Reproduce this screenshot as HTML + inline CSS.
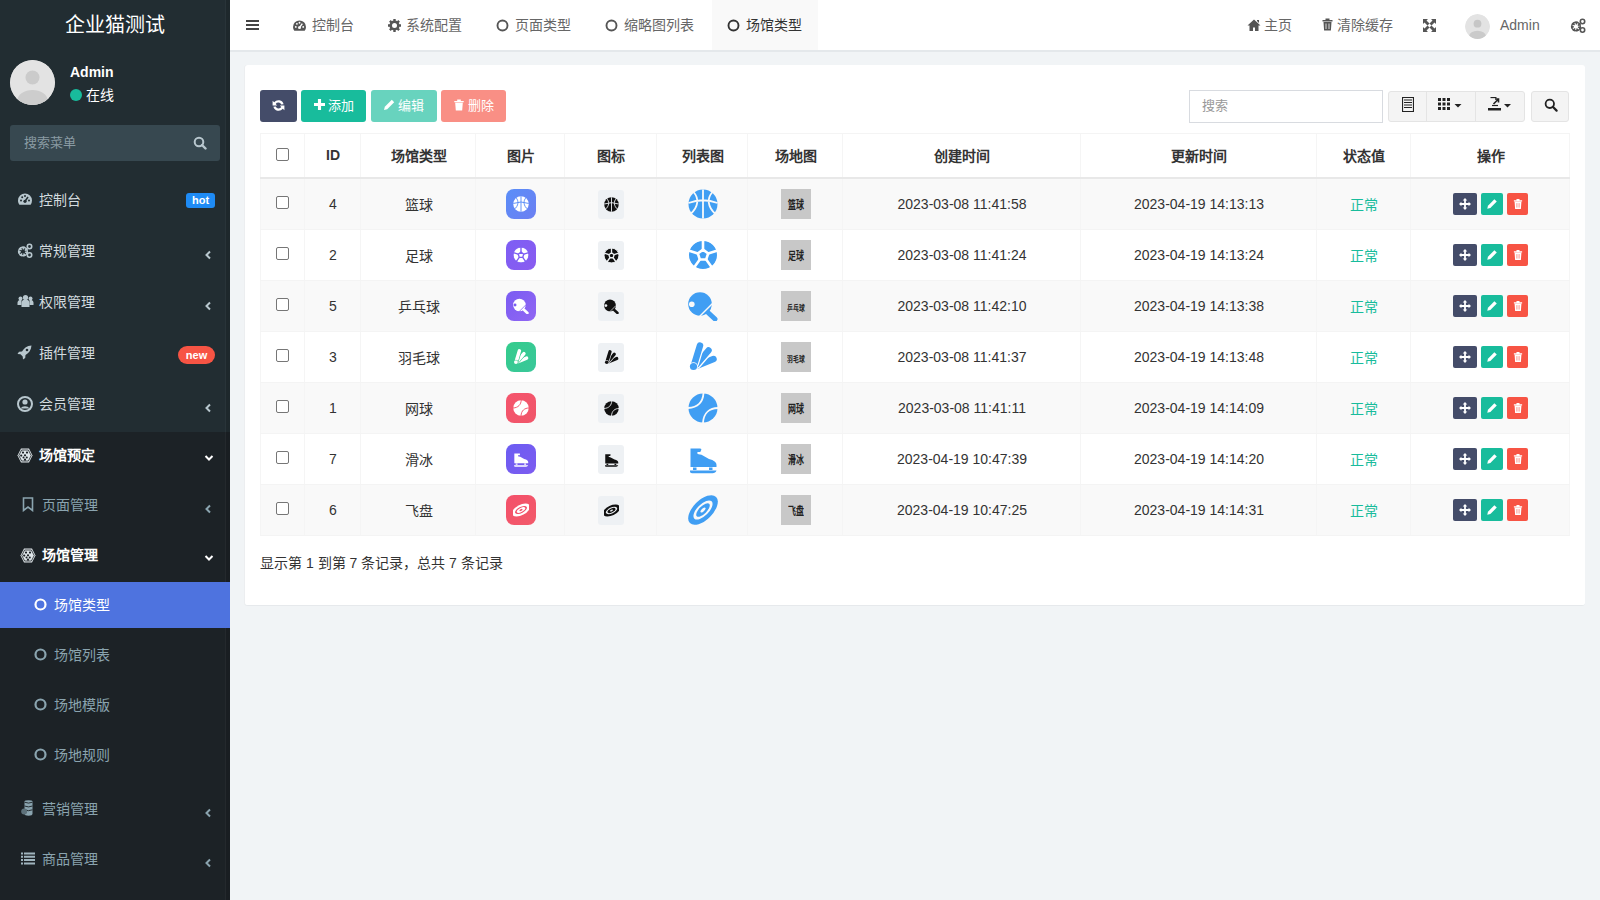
<!DOCTYPE html>
<html lang="zh-CN"><head><meta charset="utf-8">
<style>
*{box-sizing:border-box;margin:0;padding:0}
html,body{width:1600px;height:900px;overflow:hidden}
body{font-family:"Liberation Sans",sans-serif;font-size:14px;color:#333;background:#f1f4f6;position:relative}
.abs{position:absolute}
#sb{position:absolute;left:0;top:0;width:230px;height:900px;background:#222d32}
#sb .logo{position:absolute;left:0;top:0;width:230px;height:50px;line-height:50px;text-align:center;color:#fff;font-size:20px}
#sb .tv{position:absolute;left:0;top:432px;width:230px;height:468px;background:#1c2226}
.mi{position:absolute;left:0;width:230px;height:20px;line-height:20px;color:#d2dbdf;font-size:14px;white-space:nowrap}
.mi .ic{position:absolute;top:2px}
.mi .tx{position:absolute;top:0}
.mi .ar{position:absolute;left:204px;top:4px}
#hd{position:absolute;left:230px;top:0;width:1370px;height:52px;background:#fff;border-bottom:2px solid #e4e8eb}
.nav{position:absolute;top:0;height:50px;line-height:50px;color:#666;font-size:14px;white-space:nowrap}
#panel{position:absolute;left:245px;top:65px;width:1340px;height:541px;background:#fff;border-radius:3px;border-bottom:1px solid #e6e9ec;box-shadow:-1px 0 0 #eceef0}
.btn{position:absolute;top:90px;height:32px;border-radius:3px;color:#fff;font-size:13px;line-height:31px;text-align:center;white-space:nowrap}
.cb{display:inline-block;width:13px;height:13px;border:1px solid #767676;border-radius:2px;background:#fff;position:relative;top:-2px}

.pic{display:inline-block;width:30px;height:30px;border-radius:8px;vertical-align:middle;position:relative}
.pic svg{position:absolute;left:7px;top:7px}
.ico{display:inline-block;width:26px;height:29px;border-radius:3px;background:#eef1f4;vertical-align:middle;position:relative}
.ico svg{position:absolute;left:5.5px;top:7px}
.lst{vertical-align:middle}
.chd{display:inline-block;width:30px;height:30px;background:#c8c8c8;vertical-align:middle;line-height:30px;text-align:center;color:#333;overflow:hidden;white-space:nowrap}

.ob{display:inline-block;height:22px;border-radius:2px;vertical-align:middle;position:relative}
.ob svg{position:absolute;left:50%;top:50%;transform:translate(-50%,-50%)}
#tbl{position:absolute;left:260px;top:133px;width:1310px;height:403px}
.tr{position:absolute;left:0;width:1310px;height:51px;display:flex;border-bottom:1px solid #f4f4f4;background:#fff}
.tr.s{background:#f9f9f9}
.tr.th{height:46px;border-top:1px solid #f4f4f4;border-bottom:2px solid #e8e8e8;font-weight:bold}
.tr.th .td{padding-bottom:2px}
.tr.th .cb{top:0}
.td{flex:none;height:100%;display:flex;align-items:center;justify-content:center;box-shadow:inset -1px 0 #f5f5f5;font-size:14px;color:#333;white-space:nowrap}
.td:first-child{box-shadow:inset 1px 0 #f5f5f5,inset -1px 0 #f5f5f5}
.td.ok{color:#18bc9c}
</style></head><body>
<div id="sb">
  <div class="logo">企业猫测试</div>
  <!-- user panel -->
  <div class="abs" style="left:10px;top:60px;width:45px;height:45px;border-radius:50%;background:#d8d8d8;overflow:hidden">
    <svg width="45" height="45" viewBox="0 0 45 45"><circle cx="22.5" cy="22.5" r="22.5" fill="#e3e3e3"/><circle cx="22.5" cy="17.5" r="7" fill="#cbcbcb"/><ellipse cx="22.5" cy="40" rx="15" ry="10" fill="#cdcdcd"/></svg>
  </div>
  <div class="abs" style="left:70px;top:63px;color:#fff;font-weight:bold;font-size:14px;line-height:18px">Admin</div>
  <div class="abs" style="left:70px;top:89px;width:12px;height:12px;border-radius:50%;background:#18bc9c"></div>
  <div class="abs" style="left:86px;top:86px;color:#fff;font-size:14px;line-height:18px">在线</div>
  <!-- search -->
  <div class="abs" style="left:10px;top:125px;width:210px;height:36px;background:#374850;border-radius:3px"></div>
  <div class="abs" style="left:24px;top:134px;color:#8a9ba3;font-size:13px;line-height:18px">搜索菜单</div>
  <svg class="abs" style="left:193px;top:136px" width="14" height="14" viewBox="0 0 14 14"><circle cx="6" cy="6" r="4.3" fill="none" stroke="#b8c7ce" stroke-width="2"/><path d="M9 9 L12.5 12.5" stroke="#b8c7ce" stroke-width="2.4" stroke-linecap="round"/></svg>

  <!-- level1 -->
  <div class="mi" style="top:190px">
    <svg class="ic" style="left:17px" width="16" height="14" viewBox="0 0 16 14"><path d="M8 1.5A7 7 0 0 0 1 8.5c0 1.6.5 3 1.4 4.2h11.2A7 7 0 0 0 15 8.5 7 7 0 0 0 8 1.5z" fill="#b8c7ce"/><circle cx="8" cy="9.3" r="1.6" fill="#222d32"/><path d="M8 9.3 L11 5" stroke="#222d32" stroke-width="1.5"/><circle cx="4" cy="8.5" r="1" fill="#222d32"/><circle cx="5.2" cy="5.2" r="1" fill="#222d32"/><circle cx="8" cy="4" r="1" fill="#222d32"/><circle cx="12" cy="8.5" r="1" fill="#222d32"/></svg>
    <span class="tx" style="left:39px">控制台</span>
    <span class="abs" style="left:186px;top:3px;width:29px;height:15px;line-height:15px;background:#3c8dbc;background:#1e8bf5;color:#fff;font-size:11px;font-weight:bold;text-align:center;border-radius:3px">hot</span>
  </div>
  <div class="mi" style="top:241px">
    <svg class="ic" style="left:17px" width="16" height="15" viewBox="0 0 16 15"><circle cx="6" cy="8.5" r="3.6" fill="none" stroke="#b8c7ce" stroke-width="3" stroke-dasharray="2 1.2"/><circle cx="6" cy="8.5" r="4.3" fill="none" stroke="#b8c7ce" stroke-width="1.4"/><circle cx="12.5" cy="3.5" r="2.2" fill="none" stroke="#b8c7ce" stroke-width="1.6"/><circle cx="12.5" cy="12" r="2.2" fill="none" stroke="#b8c7ce" stroke-width="1.6"/></svg>
    <span class="tx" style="left:39px">常规管理</span>
    <span class="ar"><svg width="8" height="10" viewBox="0 0 8 10"><path d="M6 1.5 L2.5 5 L6 8.5" fill="none" stroke="#b8c7ce" stroke-width="2"/></svg></span>
  </div>
  <div class="mi" style="top:292px">
    <svg class="ic" style="left:17px" width="17" height="14" viewBox="0 0 17 14"><circle cx="8.5" cy="3.5" r="2.6" fill="#b8c7ce"/><circle cx="3.5" cy="4.5" r="2" fill="#b8c7ce"/><circle cx="13.5" cy="4.5" r="2" fill="#b8c7ce"/><path d="M4.5 13v-3.5a4 4 0 0 1 8 0V13z" fill="#b8c7ce"/><path d="M0.5 11v-2.5a3 3 0 0 1 4-2.5V11z M16.5 11v-2.5a3 3 0 0 0-4-2.5V11z" fill="#b8c7ce"/></svg>
    <span class="tx" style="left:39px">权限管理</span>
    <span class="ar"><svg width="8" height="10" viewBox="0 0 8 10"><path d="M6 1.5 L2.5 5 L6 8.5" fill="none" stroke="#b8c7ce" stroke-width="2"/></svg></span>
  </div>
  <div class="mi" style="top:343px">
    <svg class="ic" style="left:17px" width="15" height="15" viewBox="0 0 15 15"><path d="M14.5 0.5C10 0.8 7 3 5 6.5L2 6.8 0.5 9l3 .3 2.2 2.2.3 3 2.2-1.5.3-3C12 8 14.2 5 14.5.5z" fill="#b8c7ce"/><circle cx="10" cy="5" r="1.3" fill="#222d32"/></svg>
    <span class="tx" style="left:39px">插件管理</span>
    <span class="abs" style="left:178px;top:3px;width:37px;height:18px;line-height:18px;background:#f75444;color:#fff;font-size:11px;font-weight:bold;text-align:center;border-radius:9px">new</span>
  </div>
  <div class="mi" style="top:394px">
    <svg class="ic" style="left:17px" width="16" height="16" viewBox="0 0 16 16"><circle cx="8" cy="8" r="7" fill="none" stroke="#b8c7ce" stroke-width="2"/><circle cx="8" cy="6" r="2.6" fill="#b8c7ce"/><path d="M3.5 12.5a5 4 0 0 1 9 0" fill="#b8c7ce"/></svg>
    <span class="tx" style="left:39px">会员管理</span>
    <span class="ar"><svg width="8" height="10" viewBox="0 0 8 10"><path d="M6 1.5 L2.5 5 L6 8.5" fill="none" stroke="#b8c7ce" stroke-width="2"/></svg></span>
  </div>

  <div class="tv"></div>
  <div class="abs" style="left:225px;top:0;width:1px;height:900px;background:rgba(255,255,255,.035)"></div>
  <div class="abs" style="left:226px;top:0;width:4px;height:900px;background:rgba(0,0,0,.1)"></div>
  <div class="mi" style="top:445px;color:#fff">
    <svg class="ic" style="left:17px;top:3px" width="16" height="15" viewBox="0 0 16 15"><path d="M4 0.5h8l3.5 7-3.5 7H4L0.5 7.5z" fill="#dfe6e9"/><path d="M4.6 2h6.8l2.8 5.5-2.8 5.5H4.6L1.8 7.5z" fill="none" stroke="#1c2226" stroke-width=".8"/><circle cx="6" cy="4.6" r="1.1" fill="#1c2226"/><circle cx="10" cy="4.6" r="1.1" fill="#1c2226"/><circle cx="4.2" cy="7.6" r="1.1" fill="#1c2226"/><circle cx="8" cy="7.3" r="1.1" fill="#1c2226"/><circle cx="6.5" cy="9.6" r="1" fill="#1c2226"/><circle cx="9.8" cy="9.6" r="1" fill="#1c2226"/><circle cx="8" cy="11.7" r="1.1" fill="#1c2226"/></svg>
    <span class="tx" style="left:39px;font-weight:bold">场馆预定</span>
    <span class="ar" style="top:2px"><svg width="10" height="8" viewBox="0 0 10 8"><path d="M1.5 2 L5 5.5 L8.5 2" fill="none" stroke="#fff" stroke-width="2"/></svg></span>
  </div>
  <div class="mi" style="top:495px;color:#8aa4af">
    <svg class="ic" style="left:22px;top:2px" width="12" height="15" viewBox="0 0 12 15"><path d="M1.5 1h9v12.5L6 10l-4.5 3.5z" fill="none" stroke="#8aa4af" stroke-width="1.6"/></svg>
    <span class="tx" style="left:42px">页面管理</span>
    <span class="ar"><svg width="8" height="10" viewBox="0 0 8 10"><path d="M6 1.5 L2.5 5 L6 8.5" fill="none" stroke="#8aa4af" stroke-width="2"/></svg></span>
  </div>
  <div class="mi" style="top:545px;color:#fff">
    <svg class="ic" style="left:20px;top:3px" width="16" height="15" viewBox="0 0 16 15"><path d="M4 0.5h8l3.5 7-3.5 7H4L0.5 7.5z" fill="#dfe6e9"/><path d="M4.6 2h6.8l2.8 5.5-2.8 5.5H4.6L1.8 7.5z" fill="none" stroke="#1c2226" stroke-width=".8"/><circle cx="6" cy="4.6" r="1.1" fill="#1c2226"/><circle cx="10" cy="4.6" r="1.1" fill="#1c2226"/><circle cx="4.2" cy="7.6" r="1.1" fill="#1c2226"/><circle cx="8" cy="7.3" r="1.1" fill="#1c2226"/><circle cx="6.5" cy="9.6" r="1" fill="#1c2226"/><circle cx="9.8" cy="9.6" r="1" fill="#1c2226"/><circle cx="8" cy="11.7" r="1.1" fill="#1c2226"/></svg>
    <span class="tx" style="left:42px;font-weight:bold">场馆管理</span>
    <span class="ar" style="top:2px"><svg width="10" height="8" viewBox="0 0 10 8"><path d="M1.5 2 L5 5.5 L8.5 2" fill="none" stroke="#fff" stroke-width="2"/></svg></span>
  </div>
  <div class="abs" style="left:0;top:582px;width:230px;height:46px;background:#4e73df"></div>
  <div class="mi" style="top:595px;color:#fff">
    <svg class="ic" style="left:34px;top:3px" width="13" height="13" viewBox="0 0 13 13"><circle cx="6.5" cy="6.5" r="5" fill="none" stroke="#fff" stroke-width="2.2"/></svg>
    <span class="tx" style="left:54px">场馆类型</span>
  </div>
  <div class="mi" style="top:645px;color:#8aa4af">
    <svg class="ic" style="left:34px;top:3px" width="13" height="13" viewBox="0 0 13 13"><circle cx="6.5" cy="6.5" r="5" fill="none" stroke="#8aa4af" stroke-width="2.2"/></svg>
    <span class="tx" style="left:54px">场馆列表</span>
  </div>
  <div class="mi" style="top:695px;color:#8aa4af">
    <svg class="ic" style="left:34px;top:3px" width="13" height="13" viewBox="0 0 13 13"><circle cx="6.5" cy="6.5" r="5" fill="none" stroke="#8aa4af" stroke-width="2.2"/></svg>
    <span class="tx" style="left:54px">场地模版</span>
  </div>
  <div class="mi" style="top:745px;color:#8aa4af">
    <svg class="ic" style="left:34px;top:3px" width="13" height="13" viewBox="0 0 13 13"><circle cx="6.5" cy="6.5" r="5" fill="none" stroke="#8aa4af" stroke-width="2.2"/></svg>
    <span class="tx" style="left:54px">场地规则</span>
  </div>
  <div class="mi" style="top:799px;color:#8aa4af">
    <svg class="ic" style="left:21px;top:1px" width="13" height="16" viewBox="0 0 13 16"><path d="M3.5 1.5Q3.5 0.3 7.5 0.3T11.5 1.5V13.5Q11.5 15.7 7.5 15.7T3.5 13.5Z" fill="#8aa4af"/><path d="M3.5 2.2Q7.5 4 11.5 2.2M3.5 6Q7.5 7.8 11.5 6M3.5 9.8Q7.5 11.6 11.5 9.8" fill="none" stroke="#1c2226" stroke-width=".9"/><circle cx="3.2" cy="11.5" r="3" fill="#5d717a"/></svg>
    <span class="tx" style="left:42px">营销管理</span>
    <span class="ar"><svg width="8" height="10" viewBox="0 0 8 10"><path d="M6 1.5 L2.5 5 L6 8.5" fill="none" stroke="#8aa4af" stroke-width="2"/></svg></span>
  </div>
  <div class="mi" style="top:849px;color:#8aa4af">
    <svg class="ic" style="left:21px;top:3px" width="14" height="13" viewBox="0 0 14 13"><path d="M0 0.5h2v2H0zM3 0.5h11v2H3zM0 3.8h2v2H0zM3 3.8h11v2H3zM0 7.1h2v2H0zM3 7.1h11v2H3zM0 10.4h2v2H0zM3 10.4h11v2H3z" fill="#9fb4bd"/></svg>
    <span class="tx" style="left:42px">商品管理</span>
    <span class="ar"><svg width="8" height="10" viewBox="0 0 8 10"><path d="M6 1.5 L2.5 5 L6 8.5" fill="none" stroke="#8aa4af" stroke-width="2"/></svg></span>
  </div>
</div>
<div id="hd">
  <svg class="abs" style="left:16px;top:19px" width="13" height="12" viewBox="0 0 13 12"><path d="M0 1h13v2H0zM0 5h13v2H0zM0 9h13v2H0z" fill="#444"/></svg>
  <div class="nav" style="left:62px">
    <svg style="position:absolute;left:0;top:19px" width="15" height="13" viewBox="0 0 16 14"><path d="M8 1.5A7 7 0 0 0 1 8.5c0 1.6.5 3 1.4 4.2h11.2A7 7 0 0 0 15 8.5 7 7 0 0 0 8 1.5z" fill="#555"/><circle cx="8" cy="9.3" r="1.6" fill="#fff"/><path d="M8 9.3 L11 5" stroke="#fff" stroke-width="1.5"/><circle cx="4" cy="8.5" r="1" fill="#fff"/><circle cx="5.2" cy="5.2" r="1" fill="#fff"/><circle cx="8" cy="4" r="1" fill="#fff"/><circle cx="12" cy="8.5" r="1" fill="#fff"/></svg>
    <span style="position:absolute;left:20px">控制台</span>
  </div>
  <div class="nav" style="left:158px">
    <svg style="position:absolute;left:0;top:19px" width="13" height="13" viewBox="0 0 13 13"><circle cx="6.5" cy="6.5" r="3.8" fill="none" stroke="#555" stroke-width="2.6"/><path d="M6.5 0v3M6.5 10v3M0 6.5h3M10 6.5h3M1.9 1.9l2.1 2.1M9 9l2.1 2.1M1.9 11.1L4 9M9 4l2.1-2.1" stroke="#555" stroke-width="2.4"/></svg>
    <span style="position:absolute;left:18px">系统配置</span>
  </div>
  <div class="nav" style="left:266px">
    <svg style="position:absolute;left:0;top:19px" width="13" height="13" viewBox="0 0 13 13"><circle cx="6.5" cy="6.5" r="5" fill="none" stroke="#555" stroke-width="1.9"/></svg>
    <span style="position:absolute;left:19px">页面类型</span>
  </div>
  <div class="nav" style="left:375px">
    <svg style="position:absolute;left:0;top:19px" width="13" height="13" viewBox="0 0 13 13"><circle cx="6.5" cy="6.5" r="5" fill="none" stroke="#555" stroke-width="1.9"/></svg>
    <span style="position:absolute;left:19px">缩略图列表</span>
  </div>
  <div class="abs" style="left:482px;top:0;width:106px;height:50px;background:#f9f9f9"></div>
  <div class="nav" style="left:497px;color:#333">
    <svg style="position:absolute;left:0;top:19px" width="13" height="13" viewBox="0 0 13 13"><circle cx="6.5" cy="6.5" r="5" fill="none" stroke="#333" stroke-width="1.9"/></svg>
    <span style="position:absolute;left:19px">场馆类型</span>
  </div>

  <div class="nav" style="left:1017px">
    <svg style="position:absolute;left:0;top:19px" width="14" height="12" viewBox="0 0 14 12"><path d="M7 0.5L0.5 6.5h2V12h3.5V8.5h2V12H11.5V6.5h2z M10 1h2v3l-2-2z" fill="#555"/></svg>
    <span style="position:absolute;left:17px">主页</span>
  </div>
  <div class="nav" style="left:1092px">
    <svg style="position:absolute;left:0;top:18px" width="11" height="13" viewBox="0 0 11 13"><path d="M0.5 2h10v1.5H0.5z M3.5 0.5h4v1.5h-4z M1.5 4h8l-.6 8.5H2.1z" fill="#555"/><path d="M4 5.5v5.5M7 5.5v5.5" stroke="#fff" stroke-width=".8"/></svg>
    <span style="position:absolute;left:15px">清除缓存</span>
  </div>
  <svg class="abs" style="left:1193px;top:19px" width="13" height="13" viewBox="0 0 13 13"><path d="M0 0h5L3.5 1.5 6.5 4.5 4.5 6.5 1.5 3.5 0 5z M13 0v5l-1.5-1.5-3 3-2-2 3-3L8 0z M0 13V8l1.5 1.5 3-3 2 2-3 3L5 13z M13 13H8l1.5-1.5-3-3 2-2 3 3L13 8z" fill="#555"/></svg>
  <div class="abs" style="left:1235px;top:14px;width:25px;height:25px;border-radius:50%;overflow:hidden">
    <svg width="25" height="25" viewBox="0 0 45 45"><circle cx="22.5" cy="22.5" r="22.5" fill="#e3e3e3"/><circle cx="22.5" cy="17.5" r="7" fill="#c6c6c6"/><ellipse cx="22.5" cy="40" rx="15" ry="10" fill="#cacaca"/></svg>
  </div>
  <div class="nav" style="left:1270px">Admin</div>
  <svg class="abs" style="left:1340px;top:18px" width="16" height="15" viewBox="0 0 16 15"><circle cx="6" cy="8.5" r="3.6" fill="none" stroke="#555" stroke-width="3" stroke-dasharray="2 1.2"/><circle cx="6" cy="8.5" r="4.3" fill="none" stroke="#555" stroke-width="1.4"/><circle cx="12.5" cy="3.5" r="2.2" fill="none" stroke="#555" stroke-width="1.6"/><circle cx="12.5" cy="12" r="2.2" fill="none" stroke="#555" stroke-width="1.6"/></svg>
</div>

<div id="panel"></div>
<div class="btn" style="left:260px;width:37px;background:#444c69"><svg style="position:absolute;left:12px;top:9px" width="13" height="13" viewBox="0 0 13 13"><path d="M11.6 5.2A5.3 5.3 0 0 0 2.2 3.3L0.6 1.8V6.6h4.6L3.7 5A3.1 3.1 0 0 1 9.2 5.6z M1.4 7.8A5.3 5.3 0 0 0 10.8 9.7L12.4 11.2V6.4H7.8L9.3 8A3.1 3.1 0 0 1 3.8 7.4z" fill="#fff"/></svg></div>
<div class="btn" style="left:301px;width:65px;background:#18bc9c"><svg style="position:absolute;left:13px;top:9px" width="11" height="11" viewBox="0 0 12 12"><path d="M4.3 0h3.4v4.3H12v3.4H7.7V12H4.3V7.7H0V4.3h4.3z" fill="#fff"/></svg><span style="position:absolute;left:27px">添加</span></div>
<div class="btn" style="left:371px;width:66px;background:#18bc9c;opacity:.65"><svg style="position:absolute;left:12px;top:9px" width="12" height="12" viewBox="0 0 12 12"><path d="M8.8 0.8l2.4 2.4-7 7L1 11l.8-3.2z" fill="#fff"/></svg><span style="position:absolute;left:27px">编辑</span></div>
<div class="btn" style="left:441px;width:65px;background:#f75444;opacity:.65"><svg style="position:absolute;left:13px;top:9px" width="10" height="12" viewBox="0 0 11 13"><path d="M0.3 2h10.4v1.5H0.3zM3.5 0.5h4v1.5h-4zM1.3 4h8.4l-.7 8.5H2z" fill="#fff"/></svg><span style="position:absolute;left:27px">删除</span></div>

<div class="abs" style="left:1189px;top:90px;width:194px;height:33px;border:1px solid #d8dbe0;background:#fff"></div>
<div class="abs" style="left:1202px;top:97px;color:#999;font-size:13px;line-height:18px">搜索</div>
<div class="abs" style="left:1388px;top:91px;width:137px;height:31px;border:1px solid #e4e4e4;border-radius:3px;background:#f4f4f4"></div>
<div class="abs" style="left:1426px;top:91px;width:1px;height:31px;background:#e4e4e4"></div>
<div class="abs" style="left:1475px;top:91px;width:1px;height:31px;background:#e4e4e4"></div>
<svg class="abs" style="left:1402px;top:97px" width="12" height="15" viewBox="0 0 12 15"><path d="M0.5 0.5h11v14H0.5z" fill="none" stroke="#222" stroke-width="1.2"/><path d="M2 3h8M2 5.5h8M2 8h8M2 10.5h8" stroke="#222" stroke-width="1.1"/></svg>
<svg class="abs" style="left:1438px;top:98px" width="26" height="13" viewBox="0 0 26 13"><path d="M0 0h3v3H0zM4.5 0h3v3h-3zM9 0h3v3H9zM0 4.5h3v3H0zM4.5 4.5h3v3h-3zM9 4.5h3v3H9zM0 9h3v3H0zM4.5 9h3v3h-3zM9 9h3v3H9z" fill="#222"/><path d="M16.5 6h7l-3.5 3.5z" fill="#222"/></svg>
<svg class="abs" style="left:1488px;top:97px" width="26" height="14" viewBox="0 0 26 14"><path d="M0 11h13v2.5H0z" fill="#222"/><path d="M4 8.5h6" stroke="#222" stroke-width="1.2"/><path d="M5.5 7l4.5-4.5M7 2h3.5v3.5" fill="none" stroke="#222" stroke-width="1.6"/><path d="M2.5 0.5h6" stroke="#222" stroke-width="1.3"/><path d="M16 7h7l-3.5 3.5z" fill="#222"/></svg>
<div class="abs" style="left:1531px;top:91px;width:38px;height:31px;border:1px solid #e4e4e4;border-radius:3px;background:#f4f4f4"></div>
<svg class="abs" style="left:1544px;top:98px" width="14" height="14" viewBox="0 0 14 14"><circle cx="5.8" cy="5.8" r="4.2" fill="none" stroke="#222" stroke-width="1.8"/><path d="M8.8 8.8l3.8 3.8" stroke="#222" stroke-width="2.2" stroke-linecap="round"/></svg>

<div id="tbl">
<div class="tr th" style="top:0"><div class="td" style="width:45px"><span class="cb"></span></div><div class="td" style="width:56px">ID</div><div class="td" style="width:115px">场馆类型</div><div class="td" style="width:89px">图片</div><div class="td" style="width:92px">图标</div><div class="td" style="width:91px">列表图</div><div class="td" style="width:95px">场地图</div><div class="td" style="width:238px">创建时间</div><div class="td" style="width:236px">更新时间</div><div class="td" style="width:94px">状态值</div><div class="td" style="width:159px">操作</div></div>
<div class="tr s" style="top:46px"><div class="td" style="width:45px"><span class="cb"></span></div><div class="td" style="width:56px">4</div><div class="td" style="width:115px">篮球</div><div class="td" style="width:89px"><span class="pic" style="background:linear-gradient(135deg,#5a8ef8,#6c7ff2)"><svg width="16" height="16" viewBox="0 0 30 30"><circle cx="15" cy="15" r="14.5" fill="#fff"/><path d="M15 0.5v29M0.5 14Q15 8.5 29.5 14M5.5 3C11 9 11 18 2 25.5M24.5 3C19 9 19 18 28 25.5" fill="none" stroke="#5a8ef8" stroke-width="1.8"/></svg></span></div><div class="td" style="width:92px"><span class="ico"><svg width="15" height="15" viewBox="0 0 30 30"><circle cx="15" cy="15" r="14.5" fill="#111"/><path d="M15 0.5v29M0.5 14Q15 8.5 29.5 14M5.5 3C11 9 11 18 2 25.5M24.5 3C19 9 19 18 28 25.5" fill="none" stroke="#eef1f4" stroke-width="1.8"/></svg></span></div><div class="td" style="width:91px"><svg class="lst" width="30" height="30" viewBox="0 0 30 30"><circle cx="15" cy="15" r="14.5" fill="#409ef3"/><path d="M15 0.5v29M0.5 14Q15 8.5 29.5 14M5.5 3C11 9 11 18 2 25.5M24.5 3C19 9 19 18 28 25.5" fill="none" stroke="#f9f9f9" stroke-width="1.8"/></svg></div><div class="td" style="width:95px"><span class="chd"><span style="font-size:11px;display:inline-block;transform:scaleX(.72);font-weight:bold;color:#222">篮球</span></span></div><div class="td" style="width:238px">2023-03-08 11:41:58</div><div class="td" style="width:236px">2023-04-19 14:13:13</div><div class="td ok" style="width:94px">正常</div><div class="td" style="width:159px"><span class="ob" style="width:24px;background:#444c69"><svg width="12" height="12" viewBox="0 0 12 12"><path d="M6 0l2.3 2.4H6.9v2.7h2.7V3.7L12 6 9.6 8.3V6.9H6.9v2.7h1.4L6 12 3.7 9.6h1.4V6.9H2.4v1.4L0 6l2.4-2.3v1.4h2.7V2.4H3.7z" fill="#fff"/></svg></span><span class="ob" style="width:22px;background:#18bc9c;margin-left:4px"><svg width="11" height="11" viewBox="0 0 12 12"><path d="M8.6 0.8l2.6 2.6-7 7L0.8 11.2l.8-3.4z" fill="#fff"/></svg></span><span class="ob" style="width:21px;background:#f75444;margin-left:4px"><svg width="9" height="11" viewBox="0 0 10 12"><path d="M0.3 1.8h9.4v1.3H0.3zM3.3 0.5h3.4v1.3H3.3zM1.2 3.6h7.6l-.6 7.9H1.8z" fill="#fff"/><path d="M3.8 5v5M6.2 5v5" stroke="#f75444" stroke-width=".7"/></svg></span></div></div>
<div class="tr" style="top:97px"><div class="td" style="width:45px"><span class="cb"></span></div><div class="td" style="width:56px">2</div><div class="td" style="width:115px">足球</div><div class="td" style="width:89px"><span class="pic" style="background:linear-gradient(135deg,#7d5ef4,#8a5cf0)"><svg width="16" height="16" viewBox="0 0 30 30"><circle cx="15" cy="15" r="14.5" fill="#fff"/><path d="M15 9.6l5.2 3.8-2 6.1h-6.4l-2-6.1z" fill="#fff" stroke="#7d5ef4" stroke-width="2.6"/><path d="M15 9.6V0M20.2 13.4l9.3-3M18.2 19.5l5.7 8M11.8 19.5l-5.7 8M9.8 13.4l-9.3-3" fill="none" stroke="#7d5ef4" stroke-width="2.6"/><circle cx="15" cy="15" r="14.8" fill="none" stroke="#7d5ef4" stroke-width="1.6"/></svg></span></div><div class="td" style="width:92px"><span class="ico"><svg width="15" height="15" viewBox="0 0 30 30"><circle cx="15" cy="15" r="14.5" fill="#111"/><path d="M15 9.6l5.2 3.8-2 6.1h-6.4l-2-6.1z" fill="#111" stroke="#eef1f4" stroke-width="2.6"/><path d="M15 9.6V0M20.2 13.4l9.3-3M18.2 19.5l5.7 8M11.8 19.5l-5.7 8M9.8 13.4l-9.3-3" fill="none" stroke="#eef1f4" stroke-width="2.6"/><circle cx="15" cy="15" r="14.8" fill="none" stroke="#eef1f4" stroke-width="1.6"/></svg></span></div><div class="td" style="width:91px"><svg class="lst" width="30" height="30" viewBox="0 0 30 30"><circle cx="15" cy="15" r="14.5" fill="#409ef3"/><path d="M15 9.6l5.2 3.8-2 6.1h-6.4l-2-6.1z" fill="#409ef3" stroke="#fff" stroke-width="2.6"/><path d="M15 9.6V0M20.2 13.4l9.3-3M18.2 19.5l5.7 8M11.8 19.5l-5.7 8M9.8 13.4l-9.3-3" fill="none" stroke="#fff" stroke-width="2.6"/><circle cx="15" cy="15" r="14.8" fill="none" stroke="#fff" stroke-width="1.6"/></svg></div><div class="td" style="width:95px"><span class="chd"><span style="font-size:11px;display:inline-block;transform:scaleX(.72);font-weight:bold;color:#222">足球</span></span></div><div class="td" style="width:238px">2023-03-08 11:41:24</div><div class="td" style="width:236px">2023-04-19 14:13:24</div><div class="td ok" style="width:94px">正常</div><div class="td" style="width:159px"><span class="ob" style="width:24px;background:#444c69"><svg width="12" height="12" viewBox="0 0 12 12"><path d="M6 0l2.3 2.4H6.9v2.7h2.7V3.7L12 6 9.6 8.3V6.9H6.9v2.7h1.4L6 12 3.7 9.6h1.4V6.9H2.4v1.4L0 6l2.4-2.3v1.4h2.7V2.4H3.7z" fill="#fff"/></svg></span><span class="ob" style="width:22px;background:#18bc9c;margin-left:4px"><svg width="11" height="11" viewBox="0 0 12 12"><path d="M8.6 0.8l2.6 2.6-7 7L0.8 11.2l.8-3.4z" fill="#fff"/></svg></span><span class="ob" style="width:21px;background:#f75444;margin-left:4px"><svg width="9" height="11" viewBox="0 0 10 12"><path d="M0.3 1.8h9.4v1.3H0.3zM3.3 0.5h3.4v1.3H3.3zM1.2 3.6h7.6l-.6 7.9H1.8z" fill="#fff"/><path d="M3.8 5v5M6.2 5v5" stroke="#f75444" stroke-width=".7"/></svg></span></div></div>
<div class="tr s" style="top:148px"><div class="td" style="width:45px"><span class="cb"></span></div><div class="td" style="width:56px">5</div><div class="td" style="width:115px">乒乓球</div><div class="td" style="width:89px"><span class="pic" style="background:linear-gradient(135deg,#7a5cf2,#9166f3)"><svg width="16" height="16" viewBox="0 0 30 30"><circle cx="12" cy="13" r="11.8" fill="#fff"/><path d="M20.5 22l6.5 6" stroke="#fff" stroke-width="5" stroke-linecap="round"/><path d="M24.5 12.5L10 27" stroke="#7a5cf2" stroke-width="1.4"/><circle cx="3.8" cy="13.2" r="2.8" fill="#7a5cf2"/></svg></span></div><div class="td" style="width:92px"><span class="ico"><svg width="15" height="15" viewBox="0 0 30 30"><circle cx="12" cy="13" r="11.8" fill="#111"/><path d="M20.5 22l6.5 6" stroke="#111" stroke-width="5" stroke-linecap="round"/><path d="M24.5 12.5L10 27" stroke="#eef1f4" stroke-width="1.4"/><circle cx="3.8" cy="13.2" r="2.8" fill="#eef1f4"/></svg></span></div><div class="td" style="width:91px"><svg class="lst" width="30" height="30" viewBox="0 0 30 30"><circle cx="12" cy="13" r="11.8" fill="#409ef3"/><path d="M20.5 22l6.5 6" stroke="#409ef3" stroke-width="5" stroke-linecap="round"/><path d="M24.5 12.5L10 27" stroke="#f9f9f9" stroke-width="1.4"/><circle cx="3.8" cy="13.2" r="2.8" fill="#f9f9f9"/></svg></div><div class="td" style="width:95px"><span class="chd"><span style="font-size:8px;display:inline-block;transform:scaleX(.72);font-weight:bold;color:#222">乒乓球</span></span></div><div class="td" style="width:238px">2023-03-08 11:42:10</div><div class="td" style="width:236px">2023-04-19 14:13:38</div><div class="td ok" style="width:94px">正常</div><div class="td" style="width:159px"><span class="ob" style="width:24px;background:#444c69"><svg width="12" height="12" viewBox="0 0 12 12"><path d="M6 0l2.3 2.4H6.9v2.7h2.7V3.7L12 6 9.6 8.3V6.9H6.9v2.7h1.4L6 12 3.7 9.6h1.4V6.9H2.4v1.4L0 6l2.4-2.3v1.4h2.7V2.4H3.7z" fill="#fff"/></svg></span><span class="ob" style="width:22px;background:#18bc9c;margin-left:4px"><svg width="11" height="11" viewBox="0 0 12 12"><path d="M8.6 0.8l2.6 2.6-7 7L0.8 11.2l.8-3.4z" fill="#fff"/></svg></span><span class="ob" style="width:21px;background:#f75444;margin-left:4px"><svg width="9" height="11" viewBox="0 0 10 12"><path d="M0.3 1.8h9.4v1.3H0.3zM3.3 0.5h3.4v1.3H3.3zM1.2 3.6h7.6l-.6 7.9H1.8z" fill="#fff"/><path d="M3.8 5v5M6.2 5v5" stroke="#f75444" stroke-width=".7"/></svg></span></div></div>
<div class="tr" style="top:199px"><div class="td" style="width:45px"><span class="cb"></span></div><div class="td" style="width:56px">3</div><div class="td" style="width:115px">羽毛球</div><div class="td" style="width:89px"><span class="pic" style="background:linear-gradient(135deg,#34cc8c,#3ac79a)"><svg width="16" height="16" viewBox="0 0 30 30"><path d="M9.5 23.5L25.5 17" stroke="#fff" stroke-width="6.5" stroke-linecap="round"/><path d="M8.5 22.5L20.5 8.5" stroke="#34cc8c" stroke-width="9" stroke-linecap="round"/><path d="M8.5 22.5L20.5 8.5" stroke="#fff" stroke-width="6.5" stroke-linecap="round"/><path d="M6.5 21.5L12 3.5" stroke="#34cc8c" stroke-width="9" stroke-linecap="round"/><path d="M6.5 21.5L12 3.5" stroke="#fff" stroke-width="6.5" stroke-linecap="round"/><circle cx="5.5" cy="24.5" r="4.3" fill="#34cc8c"/><circle cx="5.5" cy="24.5" r="3.6" fill="#fff"/></svg></span></div><div class="td" style="width:92px"><span class="ico"><svg width="15" height="15" viewBox="0 0 30 30"><path d="M9.5 23.5L25.5 17" stroke="#111" stroke-width="6.5" stroke-linecap="round"/><path d="M8.5 22.5L20.5 8.5" stroke="#eef1f4" stroke-width="9" stroke-linecap="round"/><path d="M8.5 22.5L20.5 8.5" stroke="#111" stroke-width="6.5" stroke-linecap="round"/><path d="M6.5 21.5L12 3.5" stroke="#eef1f4" stroke-width="9" stroke-linecap="round"/><path d="M6.5 21.5L12 3.5" stroke="#111" stroke-width="6.5" stroke-linecap="round"/><circle cx="5.5" cy="24.5" r="4.3" fill="#eef1f4"/><circle cx="5.5" cy="24.5" r="3.6" fill="#111"/></svg></span></div><div class="td" style="width:91px"><svg class="lst" width="30" height="30" viewBox="0 0 30 30"><path d="M9.5 23.5L25.5 17" stroke="#409ef3" stroke-width="6.5" stroke-linecap="round"/><path d="M8.5 22.5L20.5 8.5" stroke="#fff" stroke-width="9" stroke-linecap="round"/><path d="M8.5 22.5L20.5 8.5" stroke="#409ef3" stroke-width="6.5" stroke-linecap="round"/><path d="M6.5 21.5L12 3.5" stroke="#fff" stroke-width="9" stroke-linecap="round"/><path d="M6.5 21.5L12 3.5" stroke="#409ef3" stroke-width="6.5" stroke-linecap="round"/><circle cx="5.5" cy="24.5" r="4.3" fill="#fff"/><circle cx="5.5" cy="24.5" r="3.6" fill="#409ef3"/></svg></div><div class="td" style="width:95px"><span class="chd"><span style="font-size:8px;display:inline-block;transform:scaleX(.72);font-weight:bold;color:#222">羽毛球</span></span></div><div class="td" style="width:238px">2023-03-08 11:41:37</div><div class="td" style="width:236px">2023-04-19 14:13:48</div><div class="td ok" style="width:94px">正常</div><div class="td" style="width:159px"><span class="ob" style="width:24px;background:#444c69"><svg width="12" height="12" viewBox="0 0 12 12"><path d="M6 0l2.3 2.4H6.9v2.7h2.7V3.7L12 6 9.6 8.3V6.9H6.9v2.7h1.4L6 12 3.7 9.6h1.4V6.9H2.4v1.4L0 6l2.4-2.3v1.4h2.7V2.4H3.7z" fill="#fff"/></svg></span><span class="ob" style="width:22px;background:#18bc9c;margin-left:4px"><svg width="11" height="11" viewBox="0 0 12 12"><path d="M8.6 0.8l2.6 2.6-7 7L0.8 11.2l.8-3.4z" fill="#fff"/></svg></span><span class="ob" style="width:21px;background:#f75444;margin-left:4px"><svg width="9" height="11" viewBox="0 0 10 12"><path d="M0.3 1.8h9.4v1.3H0.3zM3.3 0.5h3.4v1.3H3.3zM1.2 3.6h7.6l-.6 7.9H1.8z" fill="#fff"/><path d="M3.8 5v5M6.2 5v5" stroke="#f75444" stroke-width=".7"/></svg></span></div></div>
<div class="tr s" style="top:250px"><div class="td" style="width:45px"><span class="cb"></span></div><div class="td" style="width:56px">1</div><div class="td" style="width:115px">网球</div><div class="td" style="width:89px"><span class="pic" style="background:linear-gradient(135deg,#f5546c,#f0566a)"><svg width="16" height="16" viewBox="0 0 30 30"><circle cx="15" cy="15" r="14.5" fill="#fff"/><path d="M15.5 0C15 8.5 10 14.5 0 15M30 15C22 15 15.5 19.5 15 30" fill="none" stroke="#f5546c" stroke-width="1.8"/></svg></span></div><div class="td" style="width:92px"><span class="ico"><svg width="15" height="15" viewBox="0 0 30 30"><circle cx="15" cy="15" r="14.5" fill="#111"/><path d="M15.5 0C15 8.5 10 14.5 0 15M30 15C22 15 15.5 19.5 15 30" fill="none" stroke="#eef1f4" stroke-width="1.8"/></svg></span></div><div class="td" style="width:91px"><svg class="lst" width="30" height="30" viewBox="0 0 30 30"><circle cx="15" cy="15" r="14.5" fill="#409ef3"/><path d="M15.5 0C15 8.5 10 14.5 0 15M30 15C22 15 15.5 19.5 15 30" fill="none" stroke="#f9f9f9" stroke-width="1.8"/></svg></div><div class="td" style="width:95px"><span class="chd"><span style="font-size:11px;display:inline-block;transform:scaleX(.72);font-weight:bold;color:#222">网球</span></span></div><div class="td" style="width:238px">2023-03-08 11:41:11</div><div class="td" style="width:236px">2023-04-19 14:14:09</div><div class="td ok" style="width:94px">正常</div><div class="td" style="width:159px"><span class="ob" style="width:24px;background:#444c69"><svg width="12" height="12" viewBox="0 0 12 12"><path d="M6 0l2.3 2.4H6.9v2.7h2.7V3.7L12 6 9.6 8.3V6.9H6.9v2.7h1.4L6 12 3.7 9.6h1.4V6.9H2.4v1.4L0 6l2.4-2.3v1.4h2.7V2.4H3.7z" fill="#fff"/></svg></span><span class="ob" style="width:22px;background:#18bc9c;margin-left:4px"><svg width="11" height="11" viewBox="0 0 12 12"><path d="M8.6 0.8l2.6 2.6-7 7L0.8 11.2l.8-3.4z" fill="#fff"/></svg></span><span class="ob" style="width:21px;background:#f75444;margin-left:4px"><svg width="9" height="11" viewBox="0 0 10 12"><path d="M0.3 1.8h9.4v1.3H0.3zM3.3 0.5h3.4v1.3H3.3zM1.2 3.6h7.6l-.6 7.9H1.8z" fill="#fff"/><path d="M3.8 5v5M6.2 5v5" stroke="#f75444" stroke-width=".7"/></svg></span></div></div>
<div class="tr" style="top:301px"><div class="td" style="width:45px"><span class="cb"></span></div><div class="td" style="width:56px">7</div><div class="td" style="width:115px">滑冰</div><div class="td" style="width:89px"><span class="pic" style="background:linear-gradient(135deg,#6b5cf2,#7d5cf0)"><svg width="16" height="16" viewBox="0 0 30 30"><path d="M2.5 4.5H12Q14 4.5 13 6.5L12.3 8H9.5Q8.5 9.8 10.5 10.2L13.5 10.8L21 15Q28.5 17 28.5 20.8V23H2.5Z" fill="#fff"/><path d="M5 23.5h3.5v2.5H5zM21 23.5h3.5v2.5H21z" fill="#fff"/><path d="M2 26.5H28.5Q27.5 29.3 24.5 29.3H4Q2 29.3 2 27.5z" fill="#fff"/></svg></span></div><div class="td" style="width:92px"><span class="ico"><svg width="15" height="15" viewBox="0 0 30 30"><path d="M2.5 4.5H12Q14 4.5 13 6.5L12.3 8H9.5Q8.5 9.8 10.5 10.2L13.5 10.8L21 15Q28.5 17 28.5 20.8V23H2.5Z" fill="#111"/><path d="M5 23.5h3.5v2.5H5zM21 23.5h3.5v2.5H21z" fill="#111"/><path d="M2 26.5H28.5Q27.5 29.3 24.5 29.3H4Q2 29.3 2 27.5z" fill="#111"/></svg></span></div><div class="td" style="width:91px"><svg class="lst" width="30" height="30" viewBox="0 0 30 30"><path d="M2.5 4.5H12Q14 4.5 13 6.5L12.3 8H9.5Q8.5 9.8 10.5 10.2L13.5 10.8L21 15Q28.5 17 28.5 20.8V23H2.5Z" fill="#409ef3"/><path d="M5 23.5h3.5v2.5H5zM21 23.5h3.5v2.5H21z" fill="#409ef3"/><path d="M2 26.5H28.5Q27.5 29.3 24.5 29.3H4Q2 29.3 2 27.5z" fill="#409ef3"/></svg></div><div class="td" style="width:95px"><span class="chd"><span style="font-size:11px;display:inline-block;transform:scaleX(.72);font-weight:bold;color:#222">滑冰</span></span></div><div class="td" style="width:238px">2023-04-19 10:47:39</div><div class="td" style="width:236px">2023-04-19 14:14:20</div><div class="td ok" style="width:94px">正常</div><div class="td" style="width:159px"><span class="ob" style="width:24px;background:#444c69"><svg width="12" height="12" viewBox="0 0 12 12"><path d="M6 0l2.3 2.4H6.9v2.7h2.7V3.7L12 6 9.6 8.3V6.9H6.9v2.7h1.4L6 12 3.7 9.6h1.4V6.9H2.4v1.4L0 6l2.4-2.3v1.4h2.7V2.4H3.7z" fill="#fff"/></svg></span><span class="ob" style="width:22px;background:#18bc9c;margin-left:4px"><svg width="11" height="11" viewBox="0 0 12 12"><path d="M8.6 0.8l2.6 2.6-7 7L0.8 11.2l.8-3.4z" fill="#fff"/></svg></span><span class="ob" style="width:21px;background:#f75444;margin-left:4px"><svg width="9" height="11" viewBox="0 0 10 12"><path d="M0.3 1.8h9.4v1.3H0.3zM3.3 0.5h3.4v1.3H3.3zM1.2 3.6h7.6l-.6 7.9H1.8z" fill="#fff"/><path d="M3.8 5v5M6.2 5v5" stroke="#f75444" stroke-width=".7"/></svg></span></div></div>
<div class="tr s" style="top:352px"><div class="td" style="width:45px"><span class="cb"></span></div><div class="td" style="width:56px">6</div><div class="td" style="width:115px">飞盘</div><div class="td" style="width:89px"><span class="pic" style="background:linear-gradient(135deg,#f4506a,#f25a6a)"><svg width="16" height="16" viewBox="0 0 30 30"><g transform="rotate(-28 15 15)"><ellipse cx="15" cy="15" rx="18.5" ry="9.8" fill="#fff"/><ellipse cx="15" cy="15" rx="12.2" ry="5.8" fill="#f4506a"/><ellipse cx="15" cy="15" rx="8.8" ry="3.8" fill="#fff"/><ellipse cx="15" cy="15" rx="3.2" ry="1.5" fill="#f4506a"/></g></svg></span></div><div class="td" style="width:92px"><span class="ico"><svg width="15" height="15" viewBox="0 0 30 30"><g transform="rotate(-25 15 15)"><ellipse cx="15" cy="15" rx="18.5" ry="9.8" fill="#111"/><ellipse cx="15" cy="15" rx="12.2" ry="5.8" fill="#eef1f4"/><ellipse cx="15" cy="15" rx="8.8" ry="3.8" fill="#111"/><ellipse cx="15" cy="15" rx="3.2" ry="1.5" fill="#eef1f4"/></g></svg></span></div><div class="td" style="width:91px"><svg class="lst" width="30" height="30" viewBox="0 0 30 30"><g transform="rotate(-45 15 15)"><ellipse cx="15" cy="15" rx="18.5" ry="9.8" fill="#409ef3"/><ellipse cx="15" cy="15" rx="12.2" ry="5.8" fill="#f9f9f9"/><ellipse cx="15" cy="15" rx="8.8" ry="3.8" fill="#409ef3"/><ellipse cx="15" cy="15" rx="3.2" ry="1.5" fill="#f9f9f9"/></g></svg></div><div class="td" style="width:95px"><span class="chd"><span style="font-size:11px;display:inline-block;transform:scaleX(.72);font-weight:bold;color:#222">飞盘</span></span></div><div class="td" style="width:238px">2023-04-19 10:47:25</div><div class="td" style="width:236px">2023-04-19 14:14:31</div><div class="td ok" style="width:94px">正常</div><div class="td" style="width:159px"><span class="ob" style="width:24px;background:#444c69"><svg width="12" height="12" viewBox="0 0 12 12"><path d="M6 0l2.3 2.4H6.9v2.7h2.7V3.7L12 6 9.6 8.3V6.9H6.9v2.7h1.4L6 12 3.7 9.6h1.4V6.9H2.4v1.4L0 6l2.4-2.3v1.4h2.7V2.4H3.7z" fill="#fff"/></svg></span><span class="ob" style="width:22px;background:#18bc9c;margin-left:4px"><svg width="11" height="11" viewBox="0 0 12 12"><path d="M8.6 0.8l2.6 2.6-7 7L0.8 11.2l.8-3.4z" fill="#fff"/></svg></span><span class="ob" style="width:21px;background:#f75444;margin-left:4px"><svg width="9" height="11" viewBox="0 0 10 12"><path d="M0.3 1.8h9.4v1.3H0.3zM3.3 0.5h3.4v1.3H3.3zM1.2 3.6h7.6l-.6 7.9H1.8z" fill="#fff"/><path d="M3.8 5v5M6.2 5v5" stroke="#f75444" stroke-width=".7"/></svg></span></div></div>
</div>
<div class="abs" style="left:260px;top:554px;font-size:14px;line-height:18px;color:#333">显示第 1 到第 7 条记录，总共 7 条记录</div>
</body></html>
